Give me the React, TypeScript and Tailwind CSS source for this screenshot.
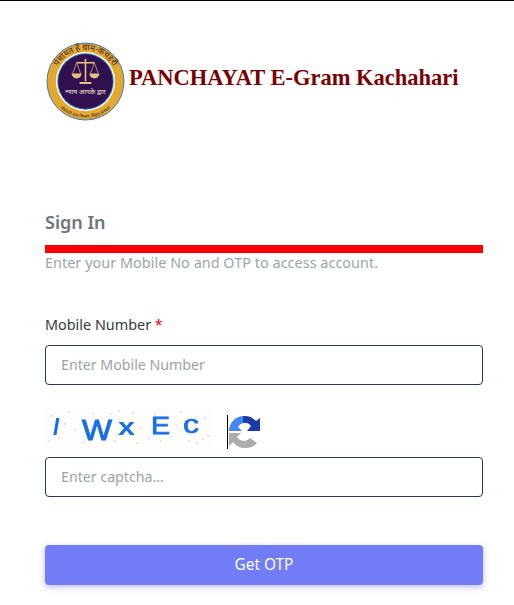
import React from "react";

const CaptchaImage = () => {
  const specks = [
    [6, 8], [14, 30], [24, 4], [30, 22], [38, 34], [48, 6], [70, 33], [66, 6], [74, 3], [88, 5],
    [96, 20], [104, 31], [116, 33], [126, 29], [136, 4], [144, 33], [152, 35], [160, 10], [163, 28], [110, 6],
    [4, 33], [20, 16], [92, 35], [158, 31], [132, 18],
  ];
  return (
    <svg width="167" height="38" viewBox="0 0 167 38" className="block shrink-0">
      <defs>
        <filter id="soft">
          <feGaussianBlur stdDeviation="0.35" />
        </filter>
      </defs>
      <rect width="167" height="38" fill="#fdfdfb" />
      {specks.map(([x, y], i) => (
        <circle key={i} cx={x} cy={y} r="0.8" fill="#c4c8cc" />
      ))}
      <g fill="#1a6ee8" fontFamily="'Liberation Sans', sans-serif" fontWeight="700" filter="url(#soft)">
        <text x="8" y="27" fontSize="23" fontStyle="italic" textLength="6" lengthAdjust="spacingAndGlyphs">I</text>
        <text x="37" y="32" fontSize="30" fontWeight="400" stroke="#1a6ee8" strokeWidth="1" textLength="30" lengthAdjust="spacingAndGlyphs">W</text>
        <text x="73" y="27" fontSize="23" textLength="17" lengthAdjust="spacingAndGlyphs">x</text>
        <text x="106" y="26" fontSize="24" fontWeight="400" stroke="#1a6ee8" strokeWidth="0.8" textLength="19" lengthAdjust="spacingAndGlyphs">E</text>
        <text x="138" y="25" fontSize="25" fontWeight="400" stroke="#1a6ee8" strokeWidth="0.6" textLength="16" lengthAdjust="spacingAndGlyphs">c</text>
      </g>
    </svg>
  );
};

const RefreshIcon = () => (
  <svg width="32" height="33" viewBox="0 0 32 33" className="block">
    <path d="M0 16 A15 15 0 0 1 14 1 L14 8 A8 8 0 0 0 9 12 L13 16 Z" fill="#4285f4" />
    <path d="M14 1 A15 15 0 0 1 27 6 L31 3 L31 16 L18 16 L22 11 A8 8 0 0 0 14 8 Z" fill="#1c3aa9" />
    <path d="M0 18 L12 18 L8 22 A8 8 0 0 0 21 23 L28 28 A16 16 0 0 1 16 33 A15 15 0 0 1 4 27 L0 31 Z" fill="#ababab" />
  </svg>
);

const Logo = () => (
  <svg width="79" height="79" viewBox="0 0 80 80" className="block shrink-0 ml-px">
    <defs>
      <path id="logoTop" d="M9.8 50.7 A32 32 0 1 1 70.2 50.7" />
      <path id="logoBottom" d="M9.7 61.2 A37 37 0 0 0 70.3 61.2" />
    </defs>
    <circle cx="40" cy="40" r="39" fill="#e3a92f" stroke="#3a7ab8" strokeWidth="1" />
    <text fontSize="8.5" fill="#3a2030" fontFamily="'Noto Sans', sans-serif">
      <textPath href="#logoTop" startOffset="50%" textAnchor="middle">पंचायत हैं ग्राम-कचहरी</textPath>
    </text>
    <text fontSize="4.5" fill="#3a2030" fontFamily="'Noto Sans', sans-serif">
      <textPath href="#logoBottom" startOffset="50%" textAnchor="middle">पंचायती राज विभाग, बिहार सरकार</textPath>
    </text>
    <circle cx="40" cy="40" r="30" fill="#ffffff" />
    <circle cx="40" cy="40" r="28.5" fill="#2f6fb5" />
    <circle cx="40" cy="40" r="27.5" fill="#31104f" />
    <g stroke="#e8c080" fill="none" strokeWidth="1.6">
      <path d="M40 17 V40" />
      <path d="M31 21 H49" />
      <path d="M34 41.5 H46" strokeWidth="2" />
      <path d="M31 21 L27 32 M31 21 L35 32 M49 21 L45 32 M49 21 L53 32" strokeWidth="0.7" />
    </g>
    <path d="M26 32 H36 A5 5 0 0 1 26 32 Z M44 32 H54 A5 5 0 0 1 44 32 Z" fill="#e8c080" />
    <text x="40" y="53" fontSize="7" textAnchor="middle" fill="#efe4d4" fontFamily="'Noto Sans', sans-serif">न्याय आपके द्वार</text>
  </svg>
);

export default function App() {
  return (
    <div className="min-h-[605px] bg-white border-t border-black font-['Noto_Sans',sans-serif]">
      <div className="pl-[45px] pr-[31px]">
        <div className="flex items-center pt-[40px] h-[120px]">
          <Logo />
          <h1 className="ml-1 -mt-[6px] text-[22.5px] font-bold text-[#7a0000] font-['Liberation_Serif',serif] whitespace-nowrap">
            PANCHAYAT E-Gram Kachahari
          </h1>
        </div>

        <h2 className="mt-[89px] text-[18px] leading-[24px] font-semibold text-[#6c757d]">Sign In</h2>
        <div className="mt-[11px] h-2 bg-[#ff0000]" />
        <p className="text-[14.4px] leading-[20px] text-[#98a6ad] tracking-[0.04px]">
          Enter your Mobile No and OTP to access account.
        </p>

        <label className="block mt-[42px] text-[14.4px] leading-[20px] text-[#343a40]">
          Mobile Number <span className="text-[#ff0000]">*</span>
        </label>
        <input
          placeholder="Enter Mobile Number"
          className="block mt-[10px] w-full h-10 pl-[15px] pr-[15px] pb-[2px] text-[14.2px] rounded-[4px] border border-[#2b3a52] placeholder:text-[#9aa3ab] outline-none"
        />

        <div className="flex items-start mt-[23px] h-[49px]">
          <CaptchaImage />
          <div className="ml-[15px] mt-[7px] w-px h-[34px] bg-black" />
          <div className="ml-[1px] mt-[7px]">
            <RefreshIcon />
          </div>
        </div>
        <input
          placeholder="Enter captcha..."
          className="block w-full h-10 pl-[15px] pr-[15px] pb-[2px] text-[14.2px] rounded-[4px] border border-[#2b3a52] placeholder:text-[#9aa3ab] outline-none"
        />

        <button className="block mt-[48px] w-full h-10 rounded-[4px] bg-[#727cf5] text-white text-[15.4px] shadow-[0_2px_6px_0_rgba(114,124,245,0.5)]">
          Get OTP
        </button>
      </div>
    </div>
  );
}
